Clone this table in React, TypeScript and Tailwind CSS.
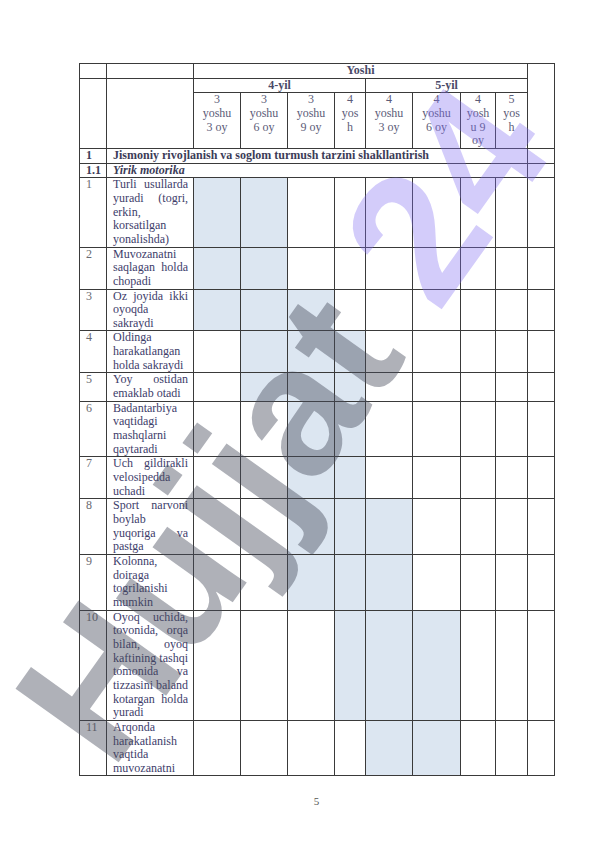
import React from 'react';

// age columns: 3y3oy, 3y6oy, 3y9oy, 4y, 4y3oy, 4y6oy, 4y9oy, 5y
type Row = { n: string; text: string; shaded: number[] };

const rows: Row[] = [
    { n: '1', text: 'Turli usullarda yuradi (togri, erkin, korsatilgan yonalishda)', shaded: [0, 1] },
    { n: '2', text: 'Muvozanatni saqlagan holda chopadi', shaded: [0, 1] },
    { n: '3', text: 'Oz joyida ikki oyoqda sakraydi', shaded: [0, 1, 2] },
    { n: '4', text: 'Oldinga harakatlangan holda sakraydi', shaded: [1, 2, 3] },
    { n: '5', text: 'Yoy ostidan emaklab otadi', shaded: [1, 2, 3] },
    { n: '6', text: 'Badantarbiya vaqtidagi mashqlarni qaytaradi', shaded: [2, 3] },
    { n: '7', text: 'Uch gildirakli velosipedda uchadi', shaded: [2, 3] },
    { n: '8', text: 'Sport narvoni boylab yuqoriga va pastga', shaded: [2, 3, 4] },
    { n: '9', text: 'Kolonna, doiraga togrilanishi mumkin', shaded: [2, 3, 4] },
    { n: '10', text: 'Oyoq uchida, tovonida, orqa bilan, oyoq kaftining tashqi tomonida va tizzasini baland kotargan holda yuradi', shaded: [3, 4, 5] },
    { n: '11', text: 'Arqonda harakatlanish vaqtida muvozanatni', shaded: [4, 5] },
];

const ages: React.ReactNode[] = [
    <>3<br />yoshu<br />3 oy</>,
    <>3<br />yoshu<br />6 oy</>,
    <>3<br />yoshu<br />9 oy</>,
    <>4<br />yos<br />h</>,
    <>4<br />yoshu<br />3 oy</>,
    <>4<br />yoshu<br />6 oy</>,
    <>4<br />yosh<br />u 9<br />oy</>,
    <>5<br />yos<br />h</>,
];

const cell = 'border border-[#3a3a3a] p-0 align-top';

const App: React.FC = () => {
    return (
        <div className="relative w-[596px] h-[842px] bg-white overflow-hidden font-['Liberation_Serif',serif] text-[12px] leading-[13.65px]">
            <div className="pt-[63px] pl-[79px]">
                <table className="w-[475px] table-fixed border-collapse">
                    <colgroup>
                        <col className="w-[27px]" />
                        <col className="w-[87px]" />
                        <col className="w-[47px]" />
                        <col className="w-[47px]" />
                        <col className="w-[47px]" />
                        <col className="w-[31px]" />
                        <col className="w-[47px]" />
                        <col className="w-[48px]" />
                        <col className="w-[35px]" />
                        <col className="w-[32px]" />
                        <col className="w-[27px]" />
                    </colgroup>
                    <thead>
                        <tr>
                            <td className={cell}></td>
                            <td className={cell}></td>
                            <td colSpan={8} className={`${cell} text-center font-bold text-[#4a4a68]`}>Yoshi</td>
                            <td rowSpan={3} className={cell}></td>
                        </tr>
                        <tr>
                            <td rowSpan={2} className={cell}></td>
                            <td rowSpan={2} className={cell}></td>
                            <td colSpan={4} className={`${cell} text-center font-bold text-[#4a4a68]`}>4-yil</td>
                            <td colSpan={4} className={`${cell} text-center font-bold text-[#4a4a68]`}>5-yil</td>
                        </tr>
                        <tr>
                            {ages.map((a, i) => (
                                <td key={i} className={`${cell} text-center text-[#5c5c78]`}>{a}</td>
                            ))}
                        </tr>
                    </thead>
                    <tbody>
                        <tr>
                            <td className={`${cell} pl-[6px] font-bold text-[#3c3c58]`}>1</td>
                            <td colSpan={9} className={`${cell} pl-[6px] font-bold text-[#3c3c58]`}>
                                Jismoniy rivojlanish va soglom turmush tarzini shakllantirish
                            </td>
                            <td className={cell}></td>
                        </tr>
                        <tr>
                            <td className={`${cell} pl-[6px] font-bold text-[#3c3c58]`}>1.1</td>
                            <td colSpan={9} className={`${cell} pl-[6px] font-bold italic text-[#3c3c58]`}>Yirik motorika</td>
                            <td className={cell}></td>
                        </tr>
                        {rows.map((r) => (
                            <tr key={r.n}>
                                <td className={`${cell} pl-[6px] text-[#6a6a70]`}>{r.n}</td>
                                <td className={`${cell} pl-[6px] pr-[5px] text-justify text-[#3d3d6a]`}>{r.text}</td>
                                {[0, 1, 2, 3, 4, 5, 6, 7].map((c) => (
                                    <td
                                        key={c}
                                        className={`${cell} ${r.shaded.includes(c) ? 'bg-[#dce6f1]' : ''}`}
                                    ></td>
                                ))}
                                <td className={cell}></td>
                            </tr>
                        ))}
                    </tbody>
                </table>
                <div className="w-[475px] text-center text-[11px] text-[#555] mt-[19px]">5</div>
            </div>

            {/* watermark */}
            <div className="pointer-events-none absolute left-[282px] top-[423px] -translate-x-1/2 -translate-y-1/2 -rotate-[54.5deg] whitespace-nowrap font-['Liberation_Sans',Arial,sans-serif] font-bold text-[184px] leading-none">
                <span className="text-[rgba(70,75,90,0.43)]">Hujjat</span>
                <span className="text-[rgba(130,110,240,0.35)]"> 24</span>
            </div>
        </div>
    );
};

export default App;
